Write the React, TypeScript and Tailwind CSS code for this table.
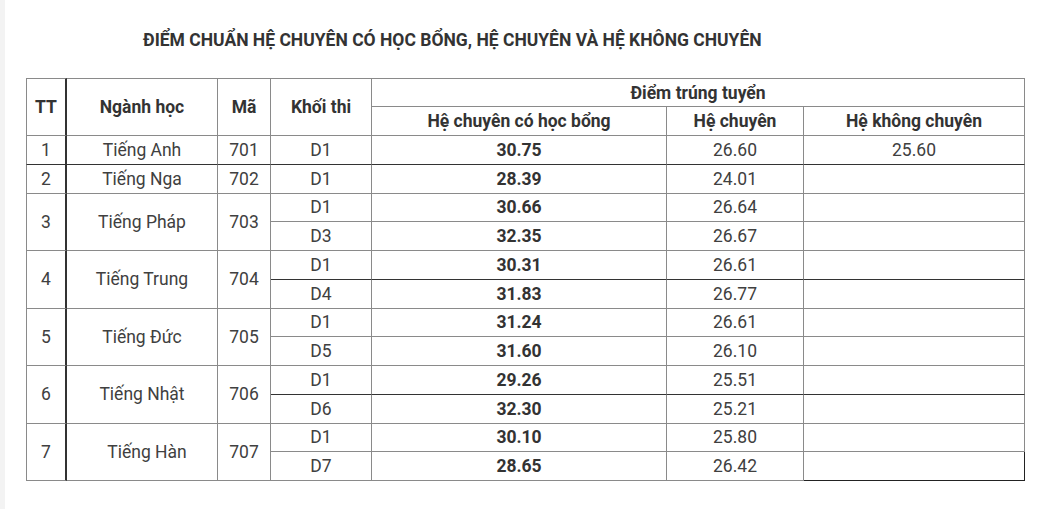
import React from "react";

type Row = {
  tt?: string;
  name?: string;
  code?: string;
  span?: number;
  khoi: string;
  hb: string;
  hc: string;
  hkc?: string;
  darkBottom?: boolean;
  darkBottomFrom?: boolean;
  last?: boolean;
};

const rows: Row[] = [
  { tt: "1", name: "Tiếng Anh", code: "701", span: 1, khoi: "D1", hb: "30.75", hc: "26.60", hkc: "25.60", darkBottom: true },
  { tt: "2", name: "Tiếng Nga", code: "702", span: 1, khoi: "D1", hb: "28.39", hc: "24.01" },
  { tt: "3", name: "Tiếng Pháp", code: "703", span: 2, khoi: "D1", hb: "30.66", hc: "26.64" },
  { khoi: "D3", hb: "32.35", hc: "26.67" },
  { tt: "4", name: "Tiếng Trung", code: "704", span: 2, khoi: "D1", hb: "30.31", hc: "26.61", darkBottomFrom: true },
  { khoi: "D4", hb: "31.83", hc: "26.77" },
  { tt: "5", name: "Tiếng Đức", code: "705", span: 2, khoi: "D1", hb: "31.24", hc: "26.61" },
  { khoi: "D5", hb: "31.60", hc: "26.10" },
  { tt: "6", name: "Tiếng Nhật", code: "706", span: 2, khoi: "D1", hb: "29.26", hc: "25.51", darkBottomFrom: true },
  { khoi: "D6", hb: "32.30", hc: "25.21" },
  { tt: "7", name: "Tiếng Hàn", code: "707", span: 2, khoi: "D1", hb: "30.10", hc: "25.80" },
  { khoi: "D7", hb: "28.65", hc: "26.42", last: true },
];

const cell = "border-r border-b border-[#8a8a8a] text-center align-middle p-0";

export default function App() {
  return (
    <div
      className="w-[1055px] h-[509px] bg-[#f3f3f3] pl-[5px]"
      style={{ fontFamily: "Roboto, 'Noto Sans', sans-serif" }}
    >
      <div className="h-full bg-white pt-[28px] text-[#404040]">
        <h1 className="pl-[138px] text-[17.5px] leading-[24px] font-bold text-[#333]">
          ĐIỂM CHUẨN HỆ CHUYÊN CÓ HỌC BỔNG, HỆ CHUYÊN VÀ HỆ KHÔNG CHUYÊN
        </h1>
        <table className="ml-[21px] mt-[26px] w-[999px] table-fixed border-separate border-spacing-0 text-[17.5px] leading-[20px]">
          <colgroup>
            <col className="w-[41px]" />
            <col className="w-[151px]" />
            <col className="w-[53px]" />
            <col className="w-[101px]" />
            <col className="w-[295px]" />
            <col className="w-[137px]" />
            <col className="w-[221px]" />
          </colgroup>
          <thead className="font-bold text-[#333]">
            <tr className="h-[29px]">
              <th rowSpan={2} className="border-l border-t border-b border-r-2 border-l-[#8a8a8a] border-t-[#8a8a8a] border-b-[#8a8a8a] border-r-[#333] text-center font-bold">
                TT
              </th>
              <th rowSpan={2} className={`${cell} border-t font-bold`}>
                Ngành học
              </th>
              <th rowSpan={2} className={`${cell} border-t font-bold`}>
                Mã
              </th>
              <th rowSpan={2} className={`${cell} border-t font-bold`}>
                Khối thi
              </th>
              <th colSpan={3} className={`${cell} border-t font-bold`}>
                Điểm trúng tuyển
              </th>
            </tr>
            <tr className="h-[29px]">
              <th className={`${cell} font-bold`}>Hệ chuyên có học bổng</th>
              <th className={`${cell} font-bold`}>Hệ chuyên</th>
              <th className={`${cell} font-bold`}>Hệ không chuyên</th>
            </tr>
          </thead>
          <tbody>
            {rows.map((r, i) => {
              const dark = r.darkBottom ? "border-b-[#333]" : "";
              const darkFrom = r.darkBottom || r.darkBottomFrom ? "border-b-[#333]" : "";
              return (
                <tr key={i} className="h-[28.75px]">
                  {r.tt && (
                    <td
                      rowSpan={r.span}
                      className={`border-l border-b border-r-2 border-l-[#8a8a8a] border-b-[#8a8a8a] border-r-[#333] text-center ${dark}`}
                    >
                      {r.tt}
                    </td>
                  )}
                  {r.name && (
                    <td rowSpan={r.span} className={`${cell} ${dark} ${r.tt === "7" ? "pl-[10px]" : ""}`}>
                      {r.name}
                    </td>
                  )}
                  {r.code && (
                    <td rowSpan={r.span} className={`${cell} ${dark}`}>
                      {r.code}
                    </td>
                  )}
                  <td className={`${cell} ${darkFrom}`}>{r.khoi}</td>
                  <td className={`${cell} ${darkFrom} font-bold text-[#333]`}>{r.hb}</td>
                  <td className={`${cell} ${darkFrom}`}>{r.hc}</td>
                  <td
                    className={`${cell} ${darkFrom} ${r.last ? "border-r-[#222] border-b-[#222]" : ""}`}
                  >
                    {r.hkc ?? ""}
                  </td>
                </tr>
              );
            })}
          </tbody>
        </table>
      </div>
    </div>
  );
}
